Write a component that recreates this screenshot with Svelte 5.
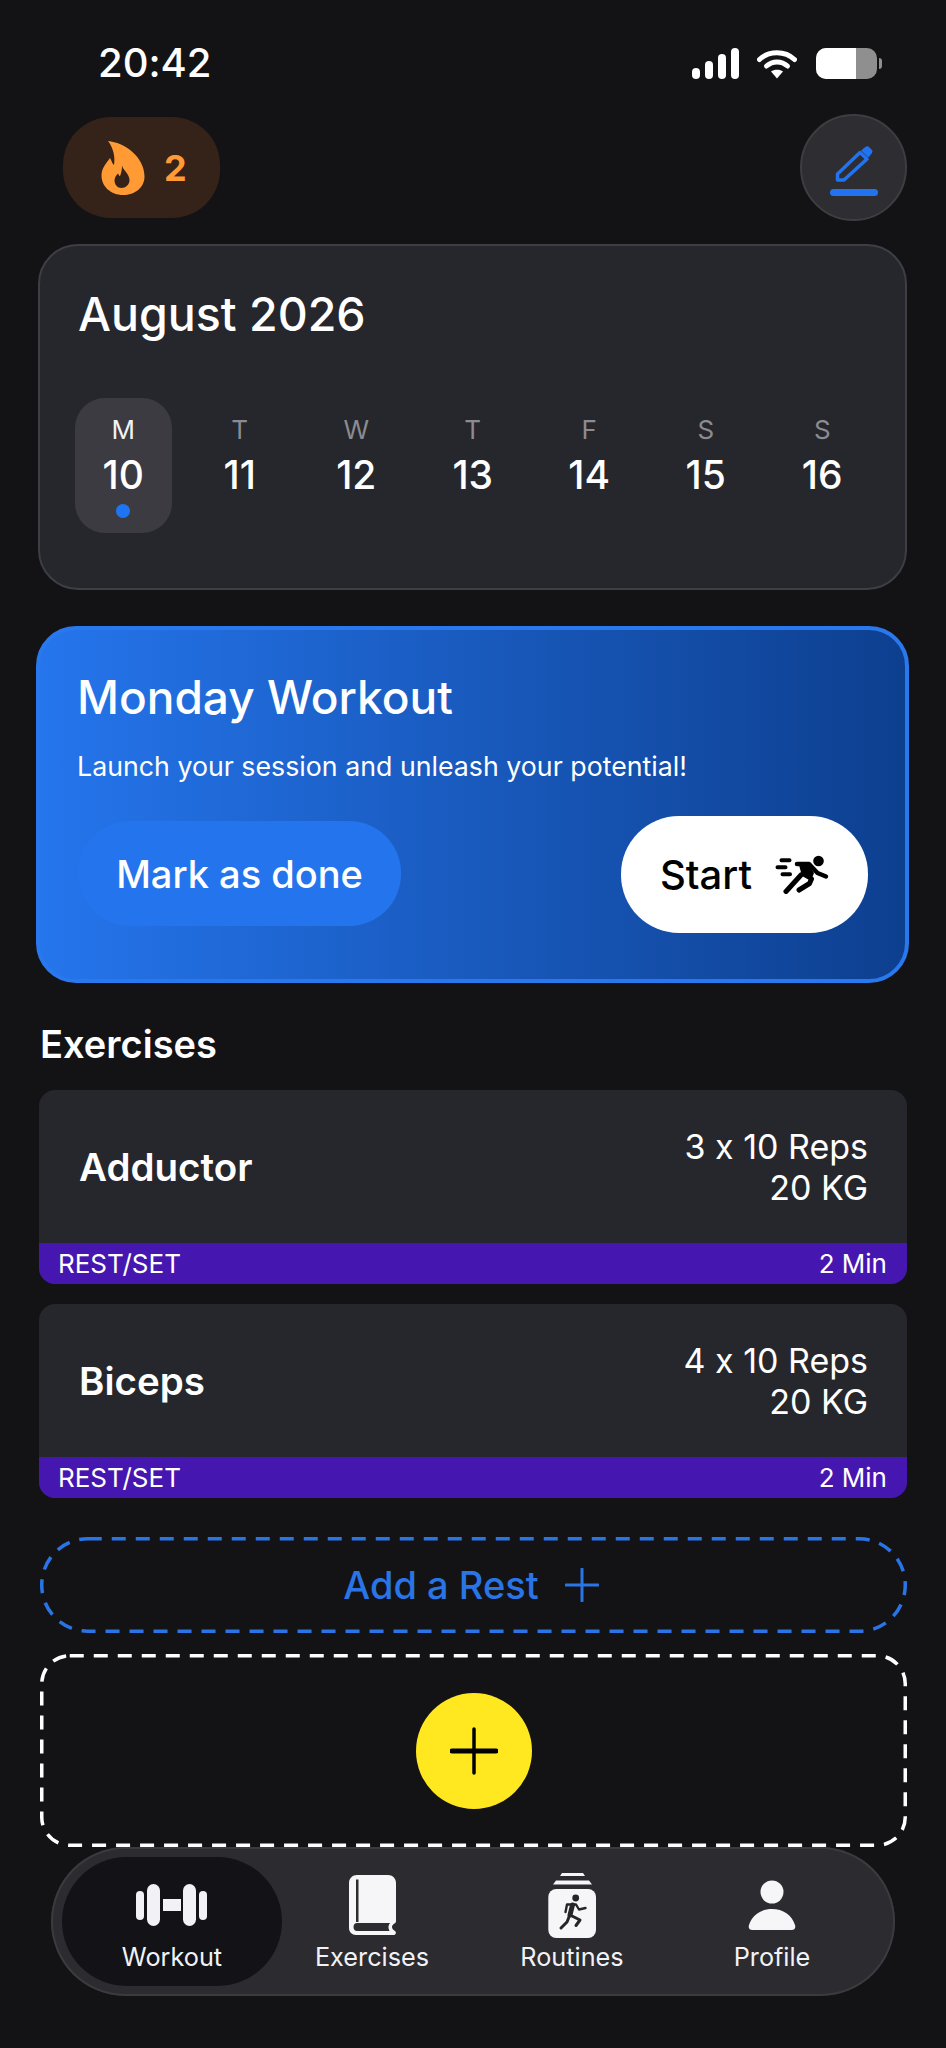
<script>
  const days = [
    { letter: 'M', num: 10, today: true },
    { letter: 'T', num: 11 },
    { letter: 'W', num: 12 },
    { letter: 'T', num: 13 },
    { letter: 'F', num: 14 },
    { letter: 'S', num: 15 },
    { letter: 'S', num: 16 }
  ];

  const exercises = [
    { name: 'Adductor', reps: '3 x 10 Reps', weight: '20 KG', rest: '2 Min' },
    { name: 'Biceps', reps: '4 x 10 Reps', weight: '20 KG', rest: '2 Min' }
  ];
</script>

<div class="screen">
  <div class="status">
    <span class="time">20:42</span>
    <div class="status-icons">
      <div class="signal">
        <i style="height: 11px"></i>
        <i style="height: 18px"></i>
        <i style="height: 25px"></i>
        <i style="height: 31px"></i>
      </div>
      <svg class="wifi" width="40" height="31" viewBox="0 0 40 31">
        <path d="M2.500 11.500C12 2.500 28 2.500 37.500 11.500" fill="none" stroke="#fff" stroke-width="5" stroke-linecap="round" />
        <path d="M9.500 18C15.500 12.500 24.500 12.500 30.500 18" fill="none" stroke="#fff" stroke-width="5" stroke-linecap="round" />
        <path d="M14 23.500C17 21 23 21 26 23.500L20 30.500Z" fill="#fff" />
      </svg>
      <div class="battery"><div class="battery-fill"></div></div>
    </div>
  </div>

  <header class="top">
    <div class="streak">
      <svg width="44" height="56" viewBox="9 8 44 55">
        <path fill="#ff9a35" d="M16 8.500C32 10 52.500 24 52.500 44C52.500 55 43 62.500 31 62.500C19 62.500 9.500 54 9.500 43C9.500 35 15 30 18 25.500C20 29 20 31 22 32.500C23.500 24 21 15 16 8.500Z" />
        <path fill="#35231a" d="M30 33C31 38 37.500 41 37.500 48C37.500 52 33.500 55.500 29.500 55.500C25.500 55.500 22.500 52 22.500 48C22.500 45 24 43 26 41C27 43 27.500 43.500 28 43.500C29.500 40 30 37 30 33Z" />
      </svg>
      <span>2</span>
    </div>
    <button class="edit" aria-label="Edit">
      <svg width="48" height="50" viewBox="0 0 48 50">
        <path d="M7.500 28L30 6.500L37 13L14 34H7.500Z" fill="none" stroke="#2273f0" stroke-width="3.500" stroke-linejoin="round" />
        <path d="M31 4.500L36 0.500Q38 0 39 1L42 4Q43 5 42 7L38.500 11.500Z" fill="#2273f0" />
        <rect x="0" y="43" width="48" height="7" rx="3.500" fill="#2273f0" />
      </svg>
    </button>
  </header>

  <main>
    <section class="calendar">
      <h2>August 2026</h2>
      <div class="week">
        {#each days as d}
          <div class="day" class:today={d.today}>
            <span class="letter">{d.letter}</span>
            <span class="num">{d.num}</span>
            {#if d.today}<span class="dot"></span>{/if}
          </div>
        {/each}
      </div>
    </section>

    <section class="hero">
      <h1>Monday Workout</h1>
      <p>Launch your session and unleash your potential!</p>
      <div class="hero-actions">
        <button class="mark">Mark as done</button>
        <button class="start">
          Start
          <svg width="54" height="39" viewBox="9 9 54 39">
            <circle cx="52.500" cy="15" r="5.300" fill="#000" />
            <g fill="none" stroke="#000" stroke-width="4" stroke-linecap="round">
              <path d="M15.500 14.300H23.500M11.500 21.300H19.500M16.500 28.300H24" />
            </g>
            <path d="M31 18H43L51.500 27L60 30.500" fill="none" stroke="#000" stroke-width="4.500" stroke-linecap="round" stroke-linejoin="round" />
            <path d="M33 19H43L48 27L45 35L36 30Z" fill="#000" />
            <path d="M35 29L20 45.500M45.500 33L43.500 37.500L33 44" fill="none" stroke="#000" stroke-width="5" stroke-linecap="round" stroke-linejoin="round" />
          </svg>
        </button>
      </div>
    </section>

    <h3 class="section-title">Exercises</h3>

    <div class="exercises">
      {#each exercises as ex}
        <article class="exercise">
          <div class="exercise-main">
            <span class="exercise-name">{ex.name}</span>
            <div class="exercise-meta">
              <span>{ex.reps}</span>
              <span>{ex.weight}</span>
            </div>
          </div>
          <div class="rest-bar">
            <span>REST/SET</span>
            <span>{ex.rest}</span>
          </div>
        </article>
      {/each}
    </div>

    <button class="add-rest">
      <svg class="dashes" width="867" height="96">
        <rect x="1.750" y="1.750" width="863.500" height="92.500" rx="46" fill="none" stroke="#2a75e6" stroke-width="3.500" stroke-dasharray="14 10" />
      </svg>
      Add a Rest
      <svg width="34" height="34" viewBox="0 0 34 34">
        <path d="M17 1V33M1 17H33" stroke="#2a75e6" stroke-width="3" stroke-linecap="round" />
      </svg>
    </button>

    <div class="add-exercise">
      <svg class="dashes" width="867" height="193">
        <rect x="1.750" y="1.750" width="863.500" height="189.500" rx="28" fill="none" stroke="#fff" stroke-width="3.500" stroke-dasharray="14 10" />
      </svg>
      <button class="fab" aria-label="Add exercise">
        <svg width="48" height="48" viewBox="0 0 48 48">
          <path d="M24 2V46" stroke="#000" stroke-width="3.500" stroke-linecap="round" />
          <path d="M2 24H46" stroke="#000" stroke-width="5" stroke-linecap="round" />
        </svg>
      </button>
    </div>
  </main>

  <nav class="tabs">
    <div class="tab active">
      <div class="tab-icon">
        <svg width="72" height="42" viewBox="0 0 72 42" fill="#f2f2f6">
          <rect x="0" y="7" width="8" height="29" rx="4" />
          <rect x="11" y="0" width="13" height="42" rx="6.500" />
          <rect x="27" y="15" width="18" height="12" />
          <rect x="47" y="0" width="13" height="42" rx="6.500" />
          <rect x="63" y="7" width="8" height="29" rx="4" />
        </svg>
      </div>
      <span>Workout</span>
    </div>
    <div class="tab">
      <div class="tab-icon">
        <svg width="47" height="60" viewBox="0 0 47 60">
          <path fill="#f6f6f8" d="M8 0H39C43.500 0 47 3.500 47 8V46C47 47 46.500 48 45.500 48.500C42.500 50 42.500 53 44 54.500L46.500 56.500C47.500 58 46.500 60 45 60H7C3 60 0 57 0 53V8C0 3.500 3.500 0 8 0Z" />
          <path fill="#2c2c31" d="M7 4.500H9.500V47H7ZM8 48H41C39 50.500 39 53 40.500 56H8C6 56 4.500 54.500 4.500 52C4.500 49.500 6 48 8 48Z" />
        </svg>
      </div>
      <span>Exercises</span>
    </div>
    <div class="tab">
      <div class="tab-icon">
        <svg width="48" height="65" viewBox="9 8 48 65">
          <path fill="#f6f6f8" d="M23 8H44L46 11H21ZM17 15.500H50L53 19.500H14Z" />
          <rect x="9.300" y="24" width="47.700" height="49" rx="8" fill="#f6f6f8" />
          <circle cx="36.700" cy="33" r="3.400" fill="#26262a" />
          <g fill="none" stroke="#26262a" stroke-linecap="round" stroke-linejoin="round">
            <path d="M26.500 47L28 39.500H37L40 44.500L46.500 43" stroke-width="2.400" />
            <path d="M33.500 40L31 50" stroke-width="5" />
            <path d="M31 50L41 55L37 60.500M30 52L28 57L22 63" stroke-width="3" />
          </g>
        </svg>
      </div>
      <span>Routines</span>
    </div>
    <div class="tab">
      <div class="tab-icon">
        <svg width="48" height="50" viewBox="0 0 48 50" fill="#f6f6f8">
          <circle cx="24" cy="12" r="11.500" />
          <path d="M4.500 50C1.500 50 0 48 1 45C4 35 13 29 24 29C35 29 44 35 47 45C48 48 46.500 50 43.500 50Z" />
        </svg>
      </div>
      <span>Profile</span>
    </div>
  </nav>
</div>

<style>
  :global(body) {
    background: #131316;
  }

  .screen {
    width: 946px;
    height: 2048px;
    background: #131316;
    color: #fff;
    font-family: Inter, 'Liberation Sans', sans-serif;
    font-feature-settings: 'calt' 0;
    overflow: hidden;
  }

  button {
    font-family: inherit;
    font-feature-settings: inherit;
    border: none;
    padding: 0;
    cursor: pointer;
  }

  .status {
    box-sizing: border-box;
    height: 114px;
    padding: 48px 69px 0 98px;
    display: flex;
    justify-content: space-between;
    align-items: flex-start;
  }

  .time {
    font-size: 40px;
    font-weight: 500;
    line-height: 30px;
  }

  .status-icons {
    display: flex;
    align-items: center;
    gap: 18px;
  }

  .signal {
    display: flex;
    align-items: flex-end;
    gap: 5px;
    height: 31px;
  }

  .signal i {
    width: 8px;
    border-radius: 4px;
    background: #fff;
  }

  .wifi {
    margin-right: 1px;
  }

  .battery {
    position: relative;
    width: 61px;
    height: 31px;
    border-radius: 10px;
    background: #8f8f8f;
  }

  /* terminal nub */
  .battery::after {
    content: '';
    position: absolute;
    top: 10px;
    right: -5px;
    width: 3px;
    height: 11px;
    border-radius: 0 3px 3px 0;
    background: #8f8f8f;
  }

  .battery-fill {
    width: 40px;
    height: 100%;
    border-radius: 10px 0 0 10px;
    background: #fff;
  }

  .top {
    height: 107px;
    padding: 0 39px 0 63px;
    display: flex;
    justify-content: space-between;
    align-items: center;
  }

  .streak {
    box-sizing: border-box;
    width: 157px;
    height: 101px;
    padding-left: 38px;
    border-radius: 48px;
    background: #35231a;
    color: #ff9a35;
    display: flex;
    align-items: center;
    gap: 19px;
    font-size: 36px;
    font-weight: 700;
  }

  .edit {
    box-sizing: border-box;
    width: 107px;
    height: 107px;
    border-radius: 50%;
    background: #2d2d32;
    border: 2px solid #3d3d42;
    display: flex;
    align-items: center;
    justify-content: center;
  }

  .edit svg {
    margin-top: 7px;
  }

  main {
    width: 869px;
    margin-left: 38px;
  }

  .calendar {
    box-sizing: border-box;
    height: 346px;
    margin-top: 23px;
    padding: 39px 24px 0 25px;
    background: #26272c;
    border: 2px solid #3e3f44;
    border-radius: 40px;
  }

  h2 {
    margin: 0 0 0 13px;
    font-size: 46.500px;
    font-weight: 500;
    line-height: 58px;
  }

  .week {
    margin-top: 55px;
    display: grid;
    grid-template-columns: repeat(7, 116.500px);
  }

  .day {
    box-sizing: border-box;
    width: 97px;
    height: 135px;
    justify-self: center;
    padding-top: 18px;
    border-radius: 30px;
    display: flex;
    flex-direction: column;
    align-items: center;
  }

  .day.today {
    background: #3b3b41;
  }

  .letter {
    font-size: 26px;
    line-height: 28px;
    color: #8b8b91;
  }

  .today .letter {
    color: #f2f2f4;
  }

  .num {
    margin-top: 9px;
    font-size: 39px;
    font-weight: 500;
    line-height: 44px;
  }

  .dot {
    width: 14px;
    height: 14px;
    margin-top: 7px;
    border-radius: 50%;
    background: #1f74f2;
  }

  .hero {
    box-sizing: border-box;
    height: 357px;
    margin: 36px -2px 0;
    padding: 0 37px 0 37px;
    background: linear-gradient(90deg, #2575ec, #0d3f8f);
    border: 4px solid #2a78ee;
    border-radius: 40px;
  }

  h1 {
    margin: 40px 0 0;
    font-size: 46px;
    font-weight: 500;
    line-height: 54px;
  }

  .hero p {
    margin: 24px 0 0;
    font-size: 26.750px;
    line-height: 36px;
  }

  .hero-actions {
    margin-top: 31px;
    display: flex;
    justify-content: space-between;
    align-items: center;
    height: 117px;
  }

  .mark {
    width: 323px;
    height: 105px;
    margin-left: 1px;
    border-radius: 52px;
    background: #2475ed;
    color: #fff;
    font-size: 38px;
    font-weight: 500;
  }

  .start {
    width: 247px;
    height: 117px;
    margin-top: 2px;
    border-radius: 58px;
    background: #fff;
    color: #000;
    font-size: 40px;
    font-weight: 500;
    display: flex;
    align-items: center;
    justify-content: center;
    gap: 23px;
  }

  .section-title {
    margin: 39px 0 0 2px;
    font-size: 38px;
    font-weight: 600;
    line-height: 44px;
    height: 44px;
  }

  .exercises {
    margin-top: 24px;
    margin-left: 1px;
    width: 868px;
    display: flex;
    flex-direction: column;
    gap: 20px;
  }

  .exercise {
    height: 194px;
    border-radius: 16px;
    background: #26272c;
    overflow: hidden;
    display: flex;
    flex-direction: column;
  }

  .exercise-main {
    flex: 1;
    padding: 0 39px 0 40px;
    display: flex;
    align-items: center;
    justify-content: space-between;
  }

  .exercise-name {
    font-size: 38.500px;
    font-weight: 600;
  }

  .exercise-meta {
    display: flex;
    flex-direction: column;
    align-items: flex-end;
    font-size: 34px;
    line-height: 41px;
  }

  .rest-bar {
    height: 41px;
    padding: 0 20px 0 19px;
    background: #4617b0;
    display: flex;
    align-items: center;
    justify-content: space-between;
    font-size: 26px;
  }

  .add-rest {
    position: relative;
    box-sizing: border-box;
    width: 867px;
    height: 96px;
    margin: 39px 0 0 2px;
    padding-right: 5px;
    background: none;
    color: #2a75e6;
    font-size: 38px;
    font-weight: 500;
    display: flex;
    align-items: center;
    justify-content: center;
    gap: 26px;
  }

  .dashes {
    position: absolute;
    top: 0;
    left: 0;
  }

  .add-exercise {
    position: relative;
    width: 867px;
    height: 193px;
    margin: 21px 0 0 2px;
    display: flex;
    align-items: center;
    justify-content: center;
  }

  .fab {
    width: 116px;
    height: 116px;
    border-radius: 50%;
    background: #ffe81f;
    display: flex;
    align-items: center;
    justify-content: center;
  }

  .tabs {
    box-sizing: border-box;
    width: 844px;
    height: 149px;
    margin-left: 51px;
    padding: 10px 0 10px 21px;
    border-radius: 75px;
    background: #2b2b30;
    box-shadow: inset 0 0 0 2px #3a3a3f;
    display: grid;
    grid-template-columns: repeat(4, 200px);
  }

  .tab {
    display: flex;
    flex-direction: column;
    align-items: center;
    padding-top: 16px;
    gap: 5px;
  }

  .tab-icon {
    height: 64px;
    display: flex;
    align-items: center;
    justify-content: center;
  }

  .tab span {
    font-size: 25.250px;
    line-height: 30px;
    color: #f2f2f6;
  }

  .tab.active {
    margin: 0 -10px;
    border-radius: 65px;
    background: #131317;
  }
</style>
